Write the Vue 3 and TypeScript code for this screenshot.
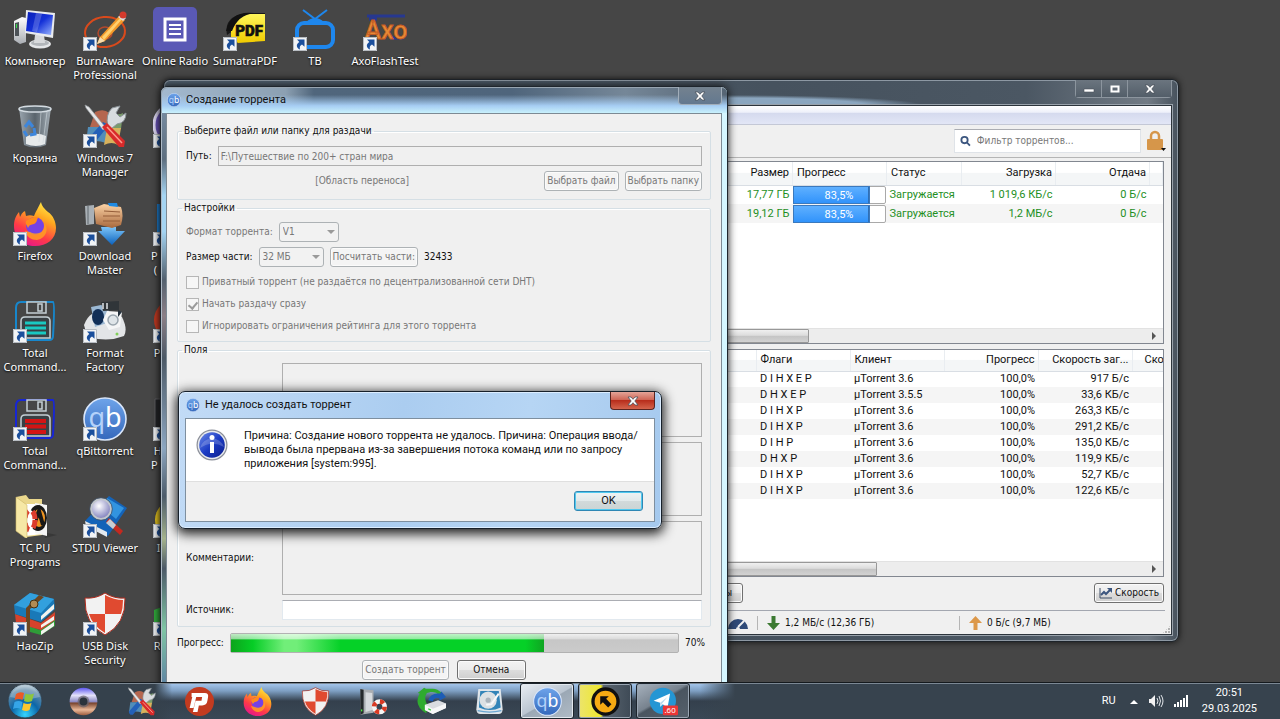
<script setup lang="ts">
interface DesktopItem {
  icon: string
  label: string
  shortcut?: boolean
  cut?: boolean
}

interface Torrent {
  size: string
  progress: number
  status: string
  down: string
  up: string
}

interface Peer {
  flags: string
  client: string
  speed: string
}

const columns: DesktopItem[][] = [
  [
    { icon: 'computer', label: 'Компьютер' },
    { icon: 'bin', label: 'Корзина' },
    { icon: 'firefox', label: 'Firefox', shortcut: true },
    { icon: 'tc-blue', label: 'Total\nCommand...', shortcut: true },
    { icon: 'tc-red', label: 'Total\nCommand...', shortcut: true },
    { icon: 'folder', label: 'TC PU\nPrograms' },
    { icon: 'haozip', label: 'HaoZip', shortcut: true },
  ],
  [
    { icon: 'burn', label: 'BurnAware\nProfessional', shortcut: true },
    { icon: 'tools', label: 'Windows 7\nManager', shortcut: true },
    { icon: 'download', label: 'Download\nMaster', shortcut: true },
    { icon: 'format', label: 'Format\nFactory', shortcut: true },
    { icon: 'qb', label: 'qBittorrent', shortcut: true },
    { icon: 'stdu', label: 'STDU Viewer', shortcut: true },
    { icon: 'shield', label: 'USB Disk\nSecurity', shortcut: true },
  ],
  [
    { icon: 'radio', label: 'Online Radio' },
    { icon: 'blob-violet', label: '', shortcut: true, cut: true },
    { icon: 'blob-blue', label: 'P\n (', shortcut: true, cut: true },
    { icon: 'blob-red', label: ' P', shortcut: true, cut: true },
    { icon: 'blob-black', label: ' H\nP', shortcut: true, cut: true },
    { icon: 'blob-yellow', label: '  I', shortcut: true, cut: true },
    { icon: 'blob-green', label: ' R', shortcut: true, cut: true },
  ],
  [{ icon: 'pdf', label: 'SumatraPDF', shortcut: true }],
  [{ icon: 'tv', label: 'ТВ', shortcut: true }],
  [{ icon: 'axo', label: 'AxoFlashTest', shortcut: true }],
]

const torrents: Torrent[] = [
  { size: '17,77 ГБ', progress: 83.5, status: 'Загружается', down: '1 019,6 КБ/с', up: '0 Б/с' },
  { size: '19,12 ГБ', progress: 83.5, status: 'Загружается', down: '1,2 МБ/с', up: '0 Б/с' },
]

const peers: Peer[] = [
  { flags: 'D I H X E P', client: 'µTorrent 3.6', speed: '917 Б/с' },
  { flags: 'D H X E P', client: 'µTorrent 3.5.5', speed: '33,6 КБ/с' },
  { flags: 'D I H X P', client: 'µTorrent 3.6', speed: '263,3 КБ/с' },
  { flags: 'D I H X P', client: 'µTorrent 3.6', speed: '291,2 КБ/с' },
  { flags: 'D I H P', client: 'µTorrent 3.6', speed: '135,0 КБ/с' },
  { flags: 'D H X P', client: 'µTorrent 3.6', speed: '119,9 КБ/с' },
  { flags: 'D I H X P', client: 'µTorrent 3.6', speed: '52,7 КБ/с' },
  { flags: 'D I H X P', client: 'µTorrent 3.6', speed: '122,6 КБ/с' },
]

const pinned = ['disc', 'tools', 'psiphon', 'firefox', 'shield', 'rescue', 'usb', 'hdd']
const running = [
  { icon: 'qb', kind: 'active' },
  { icon: 'anydesk', kind: 'alert' },
  { icon: 'telegram', kind: '' },
]
const createProgress = 70
const percent = (value: number) => value.toString().replace('.', ',') + '%'
</script>

<template>
  <svg class="sprite" aria-hidden="true">
    <defs>
      <linearGradient id="g-screen" x1="0" y1="0" x2="1" y2="1">
        <stop offset="0" stop-color="#0a1fb8" /><stop offset=".5" stop-color="#1431d8" /><stop offset="1" stop-color="#9db8ff" />
      </linearGradient>
      <linearGradient id="g-metal" x1="0" y1="0" x2="0" y2="1">
        <stop offset="0" stop-color="#ffffff" /><stop offset="1" stop-color="#a9adb3" />
      </linearGradient>
      <linearGradient id="g-fox" x1=".8" y1="0" x2=".3" y2="1">
        <stop offset="0" stop-color="#fff04a" /><stop offset=".35" stop-color="#ffa51f" /><stop offset=".7" stop-color="#ff3b47" /><stop offset="1" stop-color="#e5168c" />
      </linearGradient>
      <linearGradient id="g-qb" x1="0" y1="0" x2="0" y2="1">
        <stop offset="0" stop-color="#6ea4ea" /><stop offset="1" stop-color="#3468bc" />
      </linearGradient>
      <linearGradient id="g-bin" x1="0" y1="0" x2="1" y2="0">
        <stop offset="0" stop-color="#a9b6c1" /><stop offset=".5" stop-color="#5d6973" /><stop offset="1" stop-color="#b3bfc8" />
      </linearGradient>
      <linearGradient id="g-skin" x1="0" y1="0" x2="0" y2="1">
        <stop offset="0" stop-color="#fbd2a5" /><stop offset="1" stop-color="#a8683c" />
      </linearGradient>
      <linearGradient id="g-blue" x1="0" y1="0" x2="0" y2="1">
        <stop offset="0" stop-color="#7cc4f8" /><stop offset="1" stop-color="#0c62bd" />
      </linearGradient>
      <linearGradient id="g-disc" x1="0" y1="0" x2="0" y2="1">
        <stop offset="0" stop-color="#5c55f0" /><stop offset=".28" stop-color="#e4e2fa" /><stop offset=".5" stop-color="#8f8cc4" /><stop offset=".56" stop-color="#7a4630" /><stop offset=".8" stop-color="#e9b797" /><stop offset="1" stop-color="#9c5b3c" />
      </linearGradient>
      <linearGradient id="g-pdf" x1="0" y1="0" x2="0" y2="1">
        <stop offset="0" stop-color="#fff65a" /><stop offset="1" stop-color="#f0cb00" />
      </linearGradient>
      <radialGradient id="g-orb" cx=".5" cy=".9" r=".9">
        <stop offset="0" stop-color="#35d5ff" /><stop offset=".45" stop-color="#0c66a8" /><stop offset=".8" stop-color="#5f8aa8" /><stop offset="1" stop-color="#c5d5df" />
      </radialGradient>
      <radialGradient id="g-lens" cx=".4" cy=".35" r=".7">
        <stop offset="0" stop-color="#ffffff" /><stop offset="1" stop-color="#7676b8" />
      </radialGradient>
      <linearGradient id="g-info" x1="0" y1="0" x2="1" y2="1">
        <stop offset="0" stop-color="#6d8bea" /><stop offset=".5" stop-color="#1c3cc4" /><stop offset="1" stop-color="#0b1d8c" />
      </linearGradient>
    </defs>

    <symbol id="i-shortcut" viewBox="0 0 14 14">
      <path d="M0 0h14v14H0z" fill="#f2f4f6" /><path d="M.5.5h13v13H.5z" fill="none" stroke="#b7bcc2" />
      <path d="M4 2.500h7.500v7.200L9 7.400C6.800 8.600 6.400 10 7 12.500 3.500 11 2.500 7.200 6.300 4.900z" fill="#1b4f9c" />
    </symbol>
    <symbol id="i-computer" viewBox="0 0 44 44">
      <path d="M1 14l8-4 4 1v24l-6 2-6-4z" fill="url(#g-metal)" /><path d="M2 16l4-1v14l-4 0z" fill="#4c5257" /><path d="M3 17h1v4H3z" fill="#36e04a" />
      <ellipse cx="27" cy="37" rx="11" ry="4.500" fill="#e4e6e8" /><ellipse cx="27" cy="36" rx="9" ry="3" fill="#b2b6ba" />
      <path d="M22 28h9l1 8H21z" fill="#d8dadc" /><path d="M13 3l29 3-2 25-28-5z" fill="#e9ebee" />
      <path d="M15 5l25 3-2 20-25-4z" fill="url(#g-screen)" /><path d="M23 6l6 1-5 18-5-1z" fill="#fff" opacity=".2" />
    </symbol>
    <symbol id="i-bin" viewBox="0 0 44 44">
      <path d="M6 4l32 0-5 37q-11 5-22 0z" fill="url(#g-bin)" opacity=".85" /><ellipse cx="22" cy="5" rx="16" ry="3" fill="#5c6870" stroke="#d4dce2" stroke-width="1.500" />
      <path d="M13 33q9-6 20-1l-1 8q-9 4-19 0z" fill="#e6e9ea" /><path d="M28 8l-2 30M34 8l-4 31" stroke="#d2dbe0" opacity=".6" />
      <path d="M12 23l4-5 4 5M21 24l1 6-5 1M14 32l-3-5" fill="none" stroke="#3d86dc" stroke-width="3" />
    </symbol>
    <symbol id="i-firefox" viewBox="0 0 44 44">
      <path d="M28 0c1 5 4 7 7 10 5 3 8 10 8 16 0 11-9 18-21 18S1 36 1 24c0-5 1-9 5-14l1 5c2-4 3-5 5-6l1 5c3-1 5-1 8 0 2-5 4-8 7-14z" fill="url(#g-fox)" />
      <circle cx="22" cy="24" r="9" fill="#7542e5" /><path d="M13 19c5-3 8-5 13-4-3 2-1 5-5 7-3 1-4 0-6 4-1-3-3-4-2-7z" fill="#ff8b1c" />
      <path d="M17 30c8 4 16 0 14-9 5 5 3 15-7 17-6 0-10-3-12-9z" fill="#ff9d23" opacity=".85" />
    </symbol>
    <symbol id="i-tc-blue" viewBox="0 0 44 44">
      <path d="M8 3h32q2 1 0 34q0 4-4 4H6q-3 0-3-4V9q0-6 5-6z" fill="none" stroke="#1787cc" stroke-width="2" />
      <path d="M14 3v11h19V3zM25 5h4v7h-4z" fill="#464646" stroke="#c5d0d5" stroke-width="1.500" /><path d="M8 39V22q0-4 4-4h21q4 0 4 4v17z" fill="#394044" stroke="#c5d0d5" stroke-width="1.500" />
      <path d="M12 24h21M12 29h21M12 34h21" stroke="#19c9c2" stroke-width="3" />
    </symbol>
    <symbol id="i-tc-red" viewBox="0 0 44 44">
      <path d="M8 3h32q2 1 0 34q0 4-4 4H6q-3 0-3-4V9q0-6 5-6z" fill="none" stroke="#1726d6" stroke-width="2" />
      <path d="M14 3v11h19V3zM25 5h4v7h-4z" fill="#464646" stroke="#c5d0d5" stroke-width="1.500" /><path d="M8 39V22q0-4 4-4h21q4 0 4 4v17z" fill="#394044" stroke="#c5d0d5" stroke-width="1.500" />
      <path d="M12 24h21M12 29.500h21M12 35h21" stroke="#d31414" stroke-width="4" />
    </symbol>
    <symbol id="i-folder" viewBox="0 0 44 44">
      <path d="M30 38l14 3-12 3z" fill="#222" opacity=".4" /><path d="M3 3l10-2 3 4 13 0v36l-15 2z" fill="#ead78c" />
      <path d="M12 10l18 0 0 30-18 2z" fill="#fff" /><path d="M22 9l12 2v31l-12-3z" fill="#f5f5f5" /><ellipse cx="25" cy="24" rx="9" ry="13" fill="#181818" /><ellipse cx="26" cy="24" rx="6" ry="9" fill="#ee9422" /><path d="M20 33l6-16 4 14" fill="none" stroke="#181818" stroke-width="4" />
      <ellipse cx="17" cy="26" rx="5" ry="10" fill="#fff" stroke="#db3c2c" stroke-width="5" stroke-dasharray="8 5" />
      <path d="M3 3l11 8v34L3 37z" fill="#f6e8a6" stroke="#cdb566" stroke-width=".6" />
    </symbol>
    <symbol id="i-haozip" viewBox="0 0 44 44">
      <path d="M3 30l24 8 15-11v7L28 43 3 36z" fill="#2f9d38" /><path d="M28 39l13-9v4l-13 9z" fill="#f3f3ee" />
      <path d="M2 22l26 9 14-11v8L28 38 3 31z" fill="#d5422c" /><path d="M28 33l13-9v4l-13 8z" fill="#f3f3ee" />
      <path d="M1 13L17 1l24 6 1 10-14 13L2 22z" fill="#1979b8" /><path d="M1 13L17 1l24 6-13 14z" fill="#32a0de" /><path d="M28 24l13-12v5l-13 11z" fill="#f3f3ee" />
      <path d="M26 3l5 2-14 12v24l-4-1V16z" fill="#6b4622" /><circle cx="21" cy="12" r="4" fill="#b08b55" stroke="#453013" />
    </symbol>
    <symbol id="i-burn" viewBox="0 0 44 44">
      <ellipse cx="22" cy="25" rx="20" ry="15" fill="none" stroke="#d94a1c" stroke-width="2" transform="rotate(-5 22 25)" /><ellipse cx="22" cy="26" rx="7" ry="6" fill="none" stroke="#b5492c" stroke-width="1.500" />
      <path d="M17 30L36 9l6 4-20 21-8 3z" fill="#f39a29" /><path d="M19 30L38 10l2 1-19 22z" fill="#ffd06e" /><path d="M35 10l4-3 4 4-3 3z" fill="#d9dfe3" /><circle cx="40" cy="8" r="3.500" fill="#d33a2c" /><path d="M17 30l5 4-8 3z" fill="#f6dcae" />
    </symbol>
    <symbol id="i-tools" viewBox="0 0 44 44">
      <path d="M12 8q9-4 14 1v14H7z" fill="#b5664f" /><path d="M27 8q8 4 13 1l-2 16H25z" fill="#7a9c69" /><path d="M5 23h18v16Q12 35 3 39z" fill="#528db8" /><path d="M24 24h14l-3 17q-6-4-14 0z" fill="#d8b25c" />
      <path d="M26 21L9 42q-6 1-6-5l17-19z" fill="#2460b8" /><path d="M25 22q-3-11 4-18l8-2-4 7 4 4 6-4q0 10-9 11l-6 5z" fill="#d8dcdf" stroke="#8c9499" />
      <path d="M2 1l4 2 17 21-3 2L3 4z" fill="#e5e7e9" stroke="#92989c" stroke-width=".7" /><path d="M19 23l5-4 18 18-1 6h-5z" fill="#d82a2a" /><path d="M24 23l15 16" stroke="#ff9a8e" stroke-width="1.500" />
    </symbol>
    <symbol id="i-download" viewBox="0 0 44 44">
      <path d="M18 25h15v4h9L29 43 15 29h4z" fill="url(#g-blue)" /><path d="M2 4l9-1v19l-8 1z" fill="#a9b0b6" /><path d="M5 4v18" stroke="#61686e" />
      <path d="M11 6l10-4 17 3q3 8 0 18l-9 3-16-4z" fill="url(#g-skin)" /><path d="M20 14h17M20 19h17M21 9l16 1" stroke="#945d39" /><path d="M25 1l9 0 1 4-9-1z" fill="#1f8ae2" />
    </symbol>
    <symbol id="i-format" viewBox="0 0 44 44">
      <path d="M1 26q3-8 8-11 18-5 30 3 6 12 2 19-18 7-37 0z" fill="#e3e5e7" /><path d="M8 8l15-3 7 17-18 6z" fill="#9bb8d3" /><ellipse cx="15" cy="18" rx="6" ry="8" fill="#122f57" />
      <path d="M18 3l18-1v9l-16 1z" fill="#303539" /><path d="M20 4v6M24 4v6" stroke="#dfe4e8" stroke-width="1.500" /><path d="M20 21l4-9 15 1-2 15-11 3z" fill="#f5f6f7" /><circle cx="30" cy="21" r="5" fill="#dfe5e9" stroke="#9aa5ae" stroke-width="1.500" /><path d="M35 11l4 2-4 5z" fill="#26323d" /><circle cx="34" cy="35" r="1.500" fill="#82d05a" />
    </symbol>
    <symbol id="i-qb" viewBox="0 0 44 44">
      <circle cx="22" cy="22" r="21" fill="url(#g-qb)" stroke="#d9e6fa" stroke-width="1.600" />
      <text x="22" y="30" text-anchor="middle" font-family="Noto Sans, sans-serif" font-size="27" fill="#b4d2fa">q<tspan fill="#ffffff">b</tspan></text>
    </symbol>
    <symbol id="i-stdu" viewBox="0 0 44 44">
      <path d="M2 27L26 2l18 12-19 28z" fill="#1463b8" /><path d="M2 27l22 11v5L3 32z" fill="#e3e9ef" /><path d="M24 4l17 10-8 11L20 14z" fill="#3294e0" />
      <path d="M26 24l14 13-3 4-14-13z" fill="#c4291f" /><path d="M27 25l6 6-3 4-7-6z" fill="#c8cdd2" /><circle cx="18" cy="15" r="10" fill="url(#g-lens)" stroke="#c2c7cc" stroke-width="2" /><circle cx="18" cy="15" r="11.300" fill="none" stroke="#43536a" stroke-width=".8" />
    </symbol>
    <symbol id="i-shield" viewBox="0 0 44 44">
      <path d="M22 1Q31 7 42 6q1 26-20 37Q1 32 2 6q11 1 20-5z" fill="#f2f2f2" /><path d="M22 3q9 5 18 5 0 8-2 14H22z" fill="#e04a30" /><path d="M6 22h16v19Q9 33 6 22z" fill="#e04a30" /><path d="M22 1Q31 7 42 6q1 26-20 37Q1 32 2 6q11 1 20-5z" fill="none" stroke="#b02a1c" />
    </symbol>
    <symbol id="i-radio" viewBox="0 0 44 44">
      <rect width="44" height="44" rx="5" fill="#5a59b5" /><path d="M12 12h20v21H12z" fill="none" stroke="#fff" stroke-width="3" /><path d="M16 18h12M16 22h12M16 27h12" stroke="#fff" stroke-width="2" />
    </symbol>
    <symbol id="i-blob-violet" viewBox="0 0 44 44"><circle cx="22" cy="21" r="21" fill="#6750b8" stroke="#dcd6f2" stroke-width="3" /></symbol>
    <symbol id="i-blob-blue" viewBox="0 0 44 44"><path d="M4 2h38v38H4z" fill="#1b7cd0" /></symbol>
    <symbol id="i-blob-red" viewBox="0 0 44 44"><circle cx="22" cy="21" r="21" fill="#c1371f" /></symbol>
    <symbol id="i-blob-black" viewBox="0 0 44 44"><path d="M2 2h38v38H2z" fill="#202124" stroke="#5c5d60" /></symbol>
    <symbol id="i-blob-yellow" viewBox="0 0 44 44"><circle cx="22" cy="26" r="20" fill="#e4c21c" /></symbol>
    <symbol id="i-blob-green" viewBox="0 0 44 44"><path d="M1 18q12-6 20 0v20H1z" fill="#2fa83a" /></symbol>
    <symbol id="i-pdf" viewBox="0 0 44 44">
      <path d="M4 28Q0 8 26 6h16v8H24z" fill="#181818" /><path d="M8 20Q12 7 28 7h14v27l-27 2-7-6z" fill="url(#g-pdf)" /><path d="M3 24Q8 3 31 6 15 8 9 24z" fill="#111" />
      <text x="26" y="29" text-anchor="middle" font-family="Roboto, sans-serif" font-size="15" font-weight="900" fill="#111" stroke="#111" stroke-width=".6">PDF</text>
    </symbol>
    <symbol id="i-tv" viewBox="0 0 44 44">
      <rect x="4" y="16" width="36" height="24" rx="7" fill="none" stroke="#1e87ee" stroke-width="4" /><path d="M13 15q9-8 18 0z" fill="#1e87ee" /><path d="M10 3l12 9L34 3" fill="none" stroke="#1e87ee" stroke-width="2" />
    </symbol>
    <symbol id="i-axo" viewBox="0 0 44 44">
      <path d="M4 9h38M6 12h8M26 31h14" stroke="#27388f" stroke-width="3" />
      <text x="23" y="32" text-anchor="middle" font-family="Roboto, sans-serif" font-size="25" font-weight="500" fill="#e88a35" stroke="#c45a22" stroke-width=".8">Axo</text>
    </symbol>
    <symbol id="i-disc" viewBox="0 0 44 44">
      <circle cx="22" cy="22" r="21" fill="url(#g-disc)" /><circle cx="22" cy="22" r="9" fill="#68636b" opacity=".7" /><circle cx="22" cy="22" r="6" fill="#2b333c" />
    </symbol>
    <symbol id="i-psiphon" viewBox="0 0 44 44">
      <circle cx="22" cy="22" r="22" fill="#c33b20" /><path d="M10 9h20q6 0 5 6l-1 6q-1 7-8 7h-5l-2 10h-7l4-17h9l1-6h-9l-4 17h-6l4-17H10z" fill="#fff" />
    </symbol>
    <symbol id="i-rescue" viewBox="0 0 44 44">
      <path d="M2 3l20 2v34L2 42z" fill="#a9adb1" /><path d="M2 3l5 1v36l-5 2z" fill="#25292c" /><path d="M10 8l10 1v26l-10 3z" fill="#d7dadd" /><path d="M3 34h2v3H3z" fill="#47ed39" />
      <circle cx="31" cy="30" r="8" fill="none" stroke="#f5f5f5" stroke-width="7" /><circle cx="31" cy="30" r="8" fill="none" stroke="#d93a24" stroke-width="7" stroke-dasharray="6 6.500" />
    </symbol>
    <symbol id="i-usb" viewBox="0 0 44 44">
      <path d="M14 40Q-6 28 4 10L1 9l10-8 9 7-5 1q-6 9 2 20z" fill="#2fab2f" /><path d="M10 5h14q6 0 12 6" fill="none" stroke="#2fab2f" stroke-width="5" /><path d="M17 20q4-12 18-10l2-3 7 8-10 6v-4q-9-2-10 5z" fill="#1c5cb5" />
      <path d="M12 27l20-7 12 5v7l-20 9-12-6z" fill="#d9dce0" /><path d="M12 27l12 6 20-8v7l-20 9-12-6z" fill="#f6f7f8" /><path d="M17 33l4 2" stroke="#36c93c" stroke-width="2" />
    </symbol>
    <symbol id="i-hdd" viewBox="0 0 44 44">
      <path d="M5 3h34l3 31q-1 7-6 7H8q-5 0-6-7z" fill="#dfe5ea" /><path d="M8 6h28l3 25q-16 8-33 0z" fill="#3284b8" /><circle cx="20" cy="20" r="13" fill="#dce1e4" /><circle cx="20" cy="20" r="4" fill="#aab4bc" /><path d="M36 10L25 26l-8 1" fill="none" stroke="#f8f9fa" stroke-width="3" /><path d="M4 36q18 4 36 0" stroke="#68a5d1" stroke-width="2" fill="none" />
    </symbol>
    <symbol id="i-anydesk" viewBox="0 0 44 44">
      <circle cx="22" cy="22" r="19" fill="#f6ab13" stroke="#101010" stroke-width="5" /><path d="M14 14h13l-4 4 8 8-5 5-8-8-4 4z" fill="#101010" />
    </symbol>
    <symbol id="i-telegram" viewBox="0 0 44 44">
      <circle cx="21" cy="21" r="20" fill="#2496d4" /><path d="M7 21L32 10l-4 22-7-6-4 4v-6z" fill="#fff" /><path d="M17 24l11-9-8 10-3 5z" fill="#b9d9ed" />
      <rect x="21" y="28" width="23" height="15" rx="2" fill="#ec3636" /><text x="32" y="40" text-anchor="middle" font-family="Noto Sans, sans-serif" font-size="12" fill="#fff">.60</text>
    </symbol>
    <symbol id="i-info" viewBox="0 0 32 32">
      <circle cx="16" cy="16" r="15.500" fill="#8b8f99" /><circle cx="16" cy="16" r="14.300" fill="#e8eaee" /><circle cx="16" cy="16" r="12.800" fill="url(#g-info)" />
      <path d="M4 19Q16 11 28 18a12.500 12.500 0 0 0-24 1z" fill="#fff" opacity=".2" /><circle cx="16" cy="8.500" r="2.500" fill="#fff" /><path d="M14 13h4v11h-4z" fill="#fff" />
    </symbol>
    <symbol id="i-close" viewBox="0 0 12 10">
      <path d="M1 1h3l2 2.300L8 1h3L7.800 5 11 9H8L6 6.700 4 9H1l3.200-4z" fill="#fff" stroke="#4a525c" stroke-width=".8" />
    </symbol>
  </svg>

  <div class="desktop">
    <main class="icons">
      <div v-for="(column, c) in columns" :key="c" class="icon-column">
        <a v-for="(item, r) in column" :key="r" href="#" class="shortcut" :class="{ cut: item.cut }">
          <span class="picture">
            <svg class="big"><use :href="'#i-' + item.icon" /></svg>
            <svg v-if="item.shortcut" class="arrow"><use href="#i-shortcut" /></svg>
          </span>
          <span class="caption">{{ item.label }}</span>
        </a>
      </div>
    </main>

    <section class="window client" aria-label="qBittorrent">
      <header class="client-title">
        <div class="caption-buttons">
          <button type="button" aria-label="Свернуть"><svg width="12" height="10" viewBox="0 0 12 10"><path d="M1 5h10v3H1z" fill="#fff" stroke="#4a525c" stroke-width=".6" /></svg></button>
          <button type="button" aria-label="Развернуть"><svg width="12" height="10" viewBox="0 0 12 10"><path d="M2.500 2.500h7v5h-7z" fill="none" stroke="#fff" stroke-width="2" /></svg></button>
          <button type="button" class="wide" aria-label="Закрыть"><svg width="12" height="10"><use href="#i-close" /></svg></button>
        </div>
      </header>
      <div class="client-body">
        <div class="menu-strip"></div>
        <div class="toolbar">
          <div class="search">
            <svg width="12" height="12" viewBox="0 0 12 12"><circle cx="5" cy="5" r="3.500" fill="none" stroke="#3c567f" stroke-width="2" /><path d="M7.500 7.500L11 11" stroke="#3c567f" stroke-width="2" /></svg>
            <input type="text" aria-label="Фильтр торрентов" placeholder="Фильтр торрентов..." />
          </div>
          <button type="button" class="lock" aria-label="Блокировка">
            <svg width="20" height="22" viewBox="0 0 20 22"><path d="M5 10V6a4 4 0 0 1 8 0v4" fill="none" stroke="#d6964a" stroke-width="2.500" /><rect x="1" y="9" width="16" height="11" rx="1" fill="#d6964a" /><path d="M15 18h5l-2.500 3z" fill="#111" /></svg>
          </button>
        </div>
        <div class="frame torrents">
          <table>
            <colgroup><col /><col class="w64" /><col class="w94" /><col class="w75" /><col class="w94" /><col class="w94" /><col class="w13" /></colgroup>
            <thead>
              <tr><th></th><th class="num">Размер</th><th>Прогресс</th><th>Статус</th><th class="num">Загрузка</th><th class="num">Отдача</th><th></th></tr>
            </thead>
            <tbody>
              <tr v-for="t in torrents" :key="t.size">
                <td></td><td class="num">{{ t.size }}</td>
                <td class="meter-cell"><div class="meter"><div class="fill" :style="{ width: t.progress + '%' }"></div><span>{{ percent(t.progress) }}</span></div></td>
                <td>{{ t.status }}</td><td class="num">{{ t.down }}</td><td class="num">{{ t.up }}</td><td></td>
              </tr>
            </tbody>
          </table>
          <div class="scroll"><div class="thumb short"></div><svg width="5" height="8" viewBox="0 0 5 8"><path d="M0 0l4 4-4 4z" fill="#555" /></svg></div>
        </div>
        <div class="frame peers">
          <table>
            <colgroup><col /><col class="w94" /><col class="w94" /><col class="w94" /><col class="w94" /><col class="w31" /></colgroup>
            <thead>
              <tr><th></th><th>Флаги</th><th>Клиент</th><th class="num">Прогресс</th><th class="num">Скорость заг...</th><th class="late">Ско</th></tr>
            </thead>
            <tbody>
              <tr v-for="(p, i) in peers" :key="i">
                <td></td><td>{{ p.flags }}</td><td>{{ p.client }}</td><td class="num">100,0%</td><td class="num">{{ p.speed }}</td><td></td>
              </tr>
            </tbody>
          </table>
          <div class="scroll"><div class="thumb long"></div><svg width="5" height="8" viewBox="0 0 5 8"><path d="M0 0l4 4-4 4z" fill="#555" /></svg></div>
        </div>
        <div class="tabs">
          <button type="button" class="push tab-left">ы</button>
          <button type="button" class="push speed">
            <svg width="14" height="12" viewBox="0 0 14 12"><path d="M1 1v10h12" fill="none" stroke="#3f4f66" /><path d="M2 8l3-3 2 2 4-4" fill="none" stroke="#3c567f" stroke-width="2" /><path d="M8 1h5v5z" fill="#3c567f" /></svg>
            Скорость
          </button>
        </div>
        <footer class="status">
          <svg class="gauge" width="22" height="12" viewBox="0 0 22 12"><path d="M1 12a10 10 0 0 1 20 0H13a2 2 0 0 0-4 0z" fill="#2f4a78" /><path d="M11 10l6-6" stroke="#f0f0f0" stroke-width="2" /></svg>
          <span class="stat down"><svg width="13" height="14" viewBox="0 0 13 14"><path d="M4.500 0h4v7H13l-6.500 7L0 7h4.500z" fill="#3c7a32" /></svg>1,2 МБ/с (12,36 ГБ)</span>
          <span class="stat up"><svg width="13" height="14" viewBox="0 0 13 14"><path d="M4.500 14h4V7H13L6.500 0 0 7h4.500z" fill="#dc984a" /></svg>0 Б/с (9,7 МБ)</span>
          <span class="grip"></span>
        </footer>
      </div>
    </section>

    <section class="window creator" aria-label="Создание торрента">
      <header class="creator-title">
        <svg class="app"><use href="#i-qb" /></svg>
        <span>Создание торрента</span>
        <button type="button" class="glass-close" aria-label="Закрыть"><svg width="12" height="10"><use href="#i-close" /></svg></button>
      </header>
      <form class="creator-body" @submit.prevent>
        <fieldset class="source">
          <legend>Выберите файл или папку для раздачи</legend>
          <div class="line">
            <label for="path">Путь:</label>
            <input id="path" type="text" class="grow" value="F:\Путешествие по 200+ стран мира" disabled />
          </div>
          <div class="line pick">
            <span class="hint">[Область переноса]</span>
            <button type="button" class="push" disabled>Выбрать файл</button>
            <button type="button" class="push" disabled>Выбрать папку</button>
          </div>
        </fieldset>
        <fieldset class="settings">
          <legend>Настройки</legend>
          <div class="line">
            <label for="format" class="dim">Формат торрента:</label>
            <span class="combo narrow"><select id="format" disabled><option>V1</option></select></span>
          </div>
          <div class="line">
            <label for="piece">Размер части:</label>
            <span class="combo"><select id="piece" disabled><option>32 МБ</option></select></span>
            <button type="button" class="push" disabled>Посчитать части:</button>
            <span>32433</span>
          </div>
          <label class="check"><input type="checkbox" disabled />Приватный торрент (не раздаётся по децентрализованной сети DHT)</label>
          <label class="check"><input type="checkbox" checked disabled />Начать раздачу сразу</label>
          <label class="check"><input type="checkbox" disabled />Игнорировать ограничения рейтинга для этого торрента</label>
        </fieldset>
        <fieldset class="fields">
          <legend>Поля</legend>
          <span></span><textarea aria-label="Трекеры" disabled></textarea>
          <span></span><textarea aria-label="Веб-сиды" disabled></textarea>
          <label for="comments">Комментарии:</label><textarea id="comments" disabled></textarea>
          <label for="origin">Источник:</label><input id="origin" type="text" />
        </fieldset>
        <div class="progress-row">
          <span>Прогресс:</span>
          <div class="bar" role="progressbar" :aria-valuenow="createProgress"><div :style="{ width: createProgress + '%' }"></div></div>
          <span>{{ createProgress }}%</span>
        </div>
        <div class="actions">
          <button type="button" class="push" disabled>Создать торрент</button>
          <button type="button" class="push cancel">Отмена</button>
        </div>
      </form>
    </section>

    <section class="window message" role="alertdialog" aria-labelledby="message-title">
      <header class="message-title">
        <svg class="app"><use href="#i-qb" /></svg>
        <span id="message-title">Не удалось создать торрент</span>
        <button type="button" class="red-close" aria-label="Закрыть"><svg width="12" height="10"><use href="#i-close" /></svg></button>
      </header>
      <div class="message-body">
        <div class="message-text">
          <svg class="info"><use href="#i-info" /></svg>
          <p>Причина: Создание нового торрента не удалось. Причина: Операция ввода/<br />вывода была прервана из-за завершения потока команд или по запросу<br />приложения [system:995].</p>
        </div>
        <div class="message-foot"><button type="button" class="push ok">OK</button></div>
      </div>
    </section>

    <nav class="taskbar">
      <div class="task-list">
        <button type="button" class="start" aria-label="Пуск">
          <svg width="36" height="36" viewBox="0 0 36 36">
            <circle cx="18" cy="18" r="17" fill="url(#g-orb)" stroke="#31404c" /><path d="M3 14a15.500 15.500 0 0 1 30 0q-14 4-30 0z" fill="#fff" opacity=".25" />
            <path d="M9 11q4-3 8-1l-1.500 7q-4-2-8 0z" fill="#ec5a26" /><path d="M18.500 10.500q4 2 8.500 0l-2 7.500q-4 2-8 0z" fill="#8dc63c" /><path d="M7.500 19q4-2 8 0L14 26q-4-2-8 0z" fill="#35a5e8" /><path d="M16.500 20q4 2 8 0L22.500 27q-3 2-7.500 0z" fill="#fbc72d" />
          </svg>
        </button>
        <button v-for="name in pinned" :key="name" type="button" class="task" :aria-label="name"><svg><use :href="'#i-' + name" /></svg></button>
        <button v-for="app in running" :key="app.icon" type="button" class="task open" :class="app.kind" :aria-label="app.icon"><svg><use :href="'#i-' + app.icon" /></svg></button>
      </div>
      <div class="tray">
        <span class="lang">RU</span>
        <svg width="8" height="5" viewBox="0 0 8 5"><path d="M0 5l4-4 4 4z" fill="#fff" /></svg>
        <svg width="16" height="14" viewBox="0 0 16 14"><path d="M1 5h2l4-4v12L3 9H1z" fill="#f2f2f2" /><path d="M9 4q2 3 0 6M11 2q3 5 0 10M13 1q4 6 0 12" fill="none" stroke="#e0e4e8" /></svg>
        <svg width="14" height="12" viewBox="0 0 14 12"><path d="M0 9h2v3H0zM3 7h2v5H3zM6 5h2v7H6zM9 3h2v9H9zM12 0h2v12h-2z" fill="#fff" /></svg>
        <time class="clock">20:51<br />29.03.2025</time>
      </div>
    </nav>
  </div>
</template>

<style>
html, body, #app { height: 100%; margin: 0; }
body { overflow: hidden; background: #464646; }
</style>

<style scoped>
* { box-sizing: border-box; }
.sprite { position: absolute; width: 0; height: 0; visibility: hidden; }
button, input, select, textarea { font: inherit; margin: 0; }
.desktop {
  --ui: 11px/14px Roboto, "Noto Sans", sans-serif;
  --form: 10px/14px "DejaVu Sans Condensed", "DejaVu Sans", sans-serif;
  position: relative; display: flex; flex-direction: column; height: 100%; overflow: hidden;
  background: #464646; font: var(--ui); color: #111;
}
.icons { flex: 1; display: flex; min-height: 0; }
.icon-column { width: 70px; display: grid; grid-template-rows: repeat(7, minmax(0, 1fr)); }
.shortcut { display: flex; flex-direction: column; align-items: center; gap: 3px; padding-top: 7px; color: #fff; text-decoration: none; font: 11px/14px "Noto Sans", sans-serif; }
.picture { position: relative; width: 44px; height: 44px; flex: none; }
.big { width: 44px; height: 44px; display: block; }
.arrow { position: absolute; left: 0; bottom: 0; width: 14px; height: 14px; }
.caption { white-space: pre; text-align: center; text-shadow: 0 1px 2px #000; }
.cut .caption { align-self: flex-start; padding-left: 11px; text-align: left; }

.window { position: absolute; }
.push {
  display: inline-flex; align-items: center; justify-content: center; gap: 2px; height: 20px; padding: 0 2px;
  border: 1px solid #707070; border-radius: 3px; color: #111; white-space: nowrap;
  background: linear-gradient(#f3f3f3, #ebebeb 50%, #dddddd 50%, #cfcfcf); box-shadow: inset 0 0 0 1px #fbfbfb;
}
.push:disabled { color: #777; border-color: #adb2b5; background: #f4f4f4; }

.client {
  left: 163px; right: 101px; top: 79px; padding: 0 6px 6px 7px; border: 1px solid #1d2329; border-radius: 7px;
  background: linear-gradient(90deg, #50606f, #46525e 60%, #4b5763 85%, #727b85 97%, #47525d);
  box-shadow: inset 0 0 0 1px #8d98a3, 0 0 6px #111;
}
.client-title { height: 25px; display: flex; justify-content: flex-end; background: radial-gradient(ellipse 190px 10px at 56% 100%, #8ba6bf 70%, transparent); }
.caption-buttons { display: flex; height: 18px; border: 1px solid #8c959e; border-top: 0; border-radius: 0 0 4px 4px; }
.caption-buttons button { width: 26px; padding: 0; border: 0; border-right: 1px solid #8c959e; background: linear-gradient(#6b757f, #535e69); display: flex; align-items: center; justify-content: center; }
.caption-buttons .wide { width: 43px; border: 0; }
.client-body { background: #f0f0f0; border: 1px solid #2c343c; outline: 1px solid #99a2ab; }
.menu-strip { height: 19px; background: linear-gradient(#ffffff, #eef0fa 35%, #d5daee 40%, #e2e6f6); border-bottom: 1px solid #c4c8d6; }
.toolbar { height: 33px; display: flex; align-items: center; justify-content: flex-end; gap: 5px; padding-right: 5px; border-bottom: 1px solid #b5b5b5; }
.search { width: 187px; height: 24px; display: flex; align-items: center; gap: 6px; padding: 0 5px; background: #fff; border: 1px solid #dfe3e8; border-top-color: #abadb3; }
.search input { width: 100%; border: 0; padding: 0; outline: 0; background: none; font: var(--form); }
.search input::placeholder { color: #777; opacity: 1; }
.lock { padding: 0; border: 0; background: none; height: 22px; }
.frame { margin: 3px 7px 0 0; border: 1px solid #828790; background: #fff; display: flex; flex-direction: column; overflow: hidden; }
.torrents { height: 183px; }
.peers { height: 228px; margin-top: 5px; }
table { width: 100%; table-layout: fixed; border-collapse: collapse; font: var(--ui); }
th, td { padding: 0 4px; text-align: left; white-space: nowrap; overflow: hidden; font-weight: 400; }
th { height: 21px; border-right: 1px solid #e9edf1; border-bottom: 1px solid #d9dee4; background: linear-gradient(#fff 45%, #f4f6f7 50%); }
.torrents th { height: 23px; }
.num { text-align: right; padding: 0 3px; }
.w13 { width: 13px; } .w31 { width: 31px; } .w64 { width: 64px; } .w75 { width: 75px; } .w94 { width: 94px; }
.torrents td { height: 19px; color: #1e8f1e; padding: 0 3px; }
.torrents td.meter-cell { padding: 0 1px 0 0; }
.peers td { height: 16px; }
tbody tr:nth-child(even) { background: #f5f5f5; }
.late { padding-left: 12px; padding-right: 0; border-right: 0; }
.meter { position: relative; height: 18px; border: 1px solid #a9a9a9; border-radius: 2px; background: #fff; text-align: center; color: #fff; line-height: 17px; }
.meter .fill { position: absolute; inset: 0 auto 0 0; background: linear-gradient(#5fb0ff, #3193fb); border-right: 1px solid #2f6fb5; outline: 1px solid #3b79bd; }
.meter span { position: relative; }
.scroll { margin-top: auto; height: 15px; display: flex; align-items: center; justify-content: space-between; padding-right: 6px; background: #ededed; border-top: 1px solid #e2e2e2; }
.thumb { height: 14px; border: 1px solid #989898; border-radius: 1px; background: linear-gradient(#f0f0f0, #dcdcdc 45%, #c4c4c4 50%, #d2d2d2); }
.short { width: 636px; } .long { width: 704px; }
.tabs { height: 34px; margin-right: 6px; display: flex; align-items: center; justify-content: space-between; border-bottom: 1px solid #a3a7b0; font: var(--form); padding: 0 1px 2px 537px; }
.tab-left { width: 34px; justify-content: flex-end; padding-right: 10px; }
.speed { width: 70px; }
.status { height: 23px; display: flex; align-items: center; font: var(--form); }
.gauge { margin-left: 555px; }
.stat { display: flex; align-items: center; gap: 5px; padding-left: 9px; border-left: 1px solid #b5b5b5; }
.stat.down { width: 202px; margin-left: 8px; }
.grip { margin-left: auto; align-self: flex-end; width: 9px; height: 9px; background: radial-gradient(circle at 1px 1px, #b2b2b2 1px, transparent 1px) 0 0 / 3px 3px; clip-path: polygon(100% 0, 100% 100%, 0 100%); }

.creator {
  left: 160px; top: 86px; width: 568px; padding: 0 5px; border: 1px solid #1f262d; border-radius: 7px 7px 0 0;
  background: linear-gradient(90deg, transparent 50%, #d5f6ff 52%), linear-gradient(#8299b0, #5d6e7f 12%, #a4d4f2 18%, #a4d4f2 24%, #53616f 32%, #8c7f86 38%, #4c5966 45%, #8ea8c2 60%, #4d5c6b 68%, #a4b28c 75%, #4c5967 80%, #7fc5a4 90%, #5d80a4);
  box-shadow: inset 1px 1px 0 #aebac6, 0 0 9px #101010;
  font: var(--form);
}
.creator-title {
  height: 26px; margin: 0 -5px; padding: 0 5px 0 6px; display: flex; align-items: center; gap: 5px; border-radius: 6px 6px 0 0; font: var(--ui);
  background: linear-gradient(transparent 30%, #a6cdf3 72%, #c9f1fc), linear-gradient(90deg, #a3b9cf, #8ca0b2 22%, #50667c 27%, #4f657c 62%, #758798 82%, #566574);
  box-shadow: inset 1px 1px 0 #98a5b1;
}
.app { width: 14px; height: 14px; }
.glass-close { margin-left: auto; align-self: flex-start; width: 44px; height: 18px; padding: 0; display: flex; align-items: center; justify-content: center; border: 1px solid #a2aeba; border-top: 0; border-radius: 0 0 4px 4px; background: linear-gradient(#74828f, #63788f); }
.creator-body { background: #f0f0f0; border: 1px solid #7d8a94; padding: 10px 10px 8px; }
fieldset { min-width: 0; margin: 0 0 1px; padding: 0 8px 8px; border: 1px solid #d5dfe5; border-radius: 2px; box-shadow: inset 1px 1px 0 #fff; }
legend { padding: 0 2px; margin-left: -4px; }
.line { display: flex; align-items: center; gap: 6px; margin-top: 5px; }
.dim, .hint, .check { color: #777; }
.source .line { margin-top: 8px; }
.source .pick { margin-top: 5px; }
.settings { padding-top: 2px; }
.hint { flex: 1; text-align: center; }
input[type="text"]:not([placeholder]) { height: 20px; padding: 0 2px; border: 1px solid #afafaf; color: #777; background: #f0f0f0; }
#origin { border-color: #e2e9ef; border-top-color: #abadb3; background: #fff !important; }
.grow { flex: 1; min-width: 0; }
.combo { position: relative; display: inline-flex; }
.combo select { width: 65px; height: 20px; padding: 0 3px; appearance: none; border: 1px solid #adb2b5; border-radius: 3px; background: #f2f2f2; color: #777; opacity: 1; }
.narrow select { width: 60px; }
.combo::after { content: ""; position: absolute; right: 4px; top: 8px; border: 4px solid transparent; border-top-color: #9a9a9a; border-bottom: 0; }
.check { display: flex; align-items: center; gap: 3px; height: 14px; margin-top: 8px; }
.check input { appearance: none; flex: none; width: 13px; height: 13px; border: 1px solid #b6b6b6; background: #f6f6f6; display: grid; place-items: center; }
.check input:checked::after { content: ""; width: 4px; height: 7px; border: solid #9b9b9b; border-width: 0 2px 2px 0; rotate: 40deg; }
.fields { display: grid; grid-template-columns: 91px 1fr; gap: 5px; align-items: center; padding-bottom: 6px; }
.fields > :nth-child(2), .fields > :nth-child(3) { margin-top: 6px; }
textarea { display: block; width: 100%; height: 74px; border: 1px solid #afafaf; background: #f0f0f0; resize: none; }
.progress-row { display: flex; align-items: center; gap: 6px; margin: 6px 6px 0 0; }
.bar { flex: 1; height: 20px; border: 1px solid #b2b2b2; border-radius: 2px; background: linear-gradient(#f0f0f0, #dadada 28%, #c6c6c6 32%, #cbcbcb); }
.bar div { height: 100%; background: linear-gradient(rgba(255, 255, 255, .75), rgba(255, 255, 255, .55) 28%, transparent 32%), linear-gradient(90deg, #0ca41c, #06cd26 7%, #71ee79 17%, #71ee79 21%, #05d127 35%, #05d127 94%, #0fa522); }
.actions { display: flex; justify-content: center; gap: 8px; margin-top: 7px; }
.cancel { width: 69px; }

.message {
  left: 178px; top: 391px; width: 484px; padding: 0 6px 6px; border: 1px solid #17202a; border-radius: 7px;
  background: linear-gradient(100deg, #c2dbf6, #abcdf0 45%, #b6d5f4 70%, #a5c9ee); box-shadow: inset 0 0 0 1px #dcedff, 0 3px 12px 2px #202020; font: var(--ui);
}
.message-title { height: 26px; display: flex; align-items: center; gap: 5px; padding-left: 1px; }
.red-close { margin-left: auto; align-self: flex-start; width: 45px; height: 18px; padding: 0; display: flex; align-items: center; justify-content: center; border: 1px solid #5b2520; border-top: 0; border-radius: 0 0 4px 4px; background: linear-gradient(#e4a498, #cf6757 45%, #b82e1c 50%, #d4644c); }
.message-body { border: 1px solid #7e8f9f; background: #f0f0f0; }
.message-text { display: flex; align-items: flex-start; padding: 10px; gap: 16px; background: #fff; border-bottom: 1px solid #dfdfdf; }
.message-text p { margin: 0; white-space: nowrap; }
.info { width: 32px; height: 32px; flex: none; }
.message-foot { display: flex; justify-content: flex-end; padding: 9px 11px 10px; }
.ok { width: 69px; border-color: #2f87b4; background: linear-gradient(#eff3f4, #e2e9ea 50%, #d2dadb 50%, #cbd4d4); box-shadow: inset 0 0 0 1px #50c9ef; }

.taskbar {
  position: relative; flex: none; height: 37px; display: flex; align-items: center; justify-content: space-between;
  border-top: 1px solid #14191d; color: #fff;
  background: linear-gradient(90deg, #35414c 0 155px, transparent 172px 700px, #37434e 735px), linear-gradient(#a8caf0, #7e9fc3 22%, #34404d 50%, #3a4856);
  box-shadow: inset 0 1px 0 #7b8894;
}
.task-list { display: flex; align-items: center; padding-left: 7px; }
.start { width: 36px; height: 36px; padding: 0; border: 0; background: none; margin-right: 13px; }
.task { width: 54px; height: 36px; margin-right: 4px; padding: 0; display: flex; align-items: center; justify-content: center; border: 1px solid transparent; border-radius: 3px; background: none; }
.task svg { width: 29px; height: 29px; }
.open { border-color: #1c242c; background: linear-gradient(150deg, #a7b2be, #77828e 45%, #4a5560 50%, #56616c); box-shadow: inset 0 0 0 1px #9aa6b3; }
.active { background: linear-gradient(150deg, #e9eef4, #bac5d1 50%, #9ba8b5 52%, #b0bbc6); box-shadow: inset 0 0 0 1px #e2e8ee; }
.alert { background: linear-gradient(90deg, #ece46c, #eee82e 42%, #5a6570 47%, #3e4a56); }
.tray { display: flex; align-items: center; gap: 14px; padding-right: 23px; line-height: 16px; }
.tray svg + svg { margin-left: -4px; }
.clock { text-align: center; }
</style>
